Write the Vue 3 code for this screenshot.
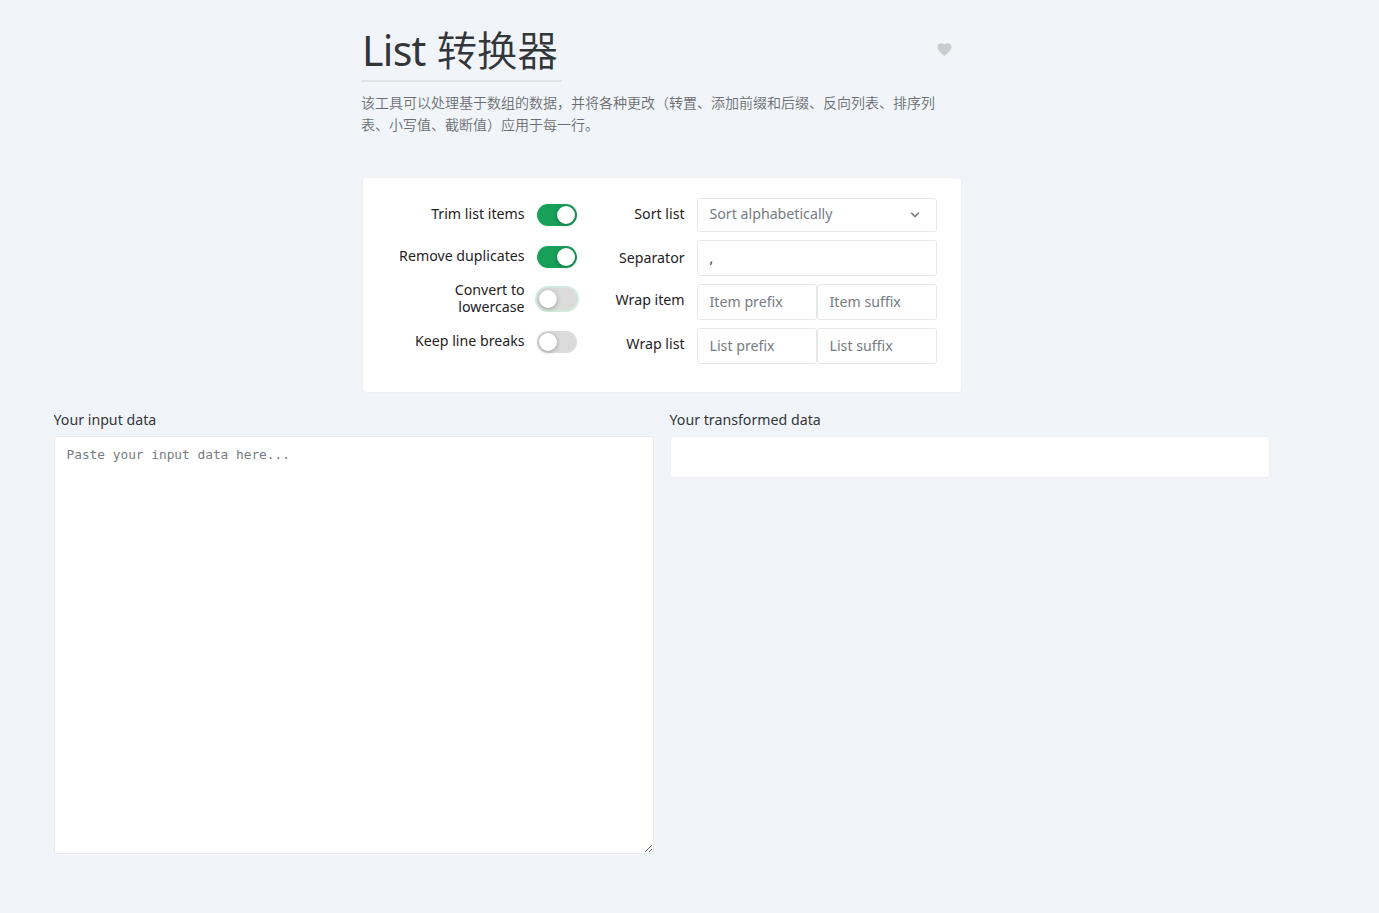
<script setup>
import { ref } from 'vue'

const switches = ref([
  { label: 'Trim list items', on: true, cls: 'trim' },
  { label: 'Remove duplicates', on: true, cls: 'dup' },
  { label: 'Convert to lowercase', on: false, cls: 'lower focused' },
  { label: 'Keep line breaks', on: false, cls: 'keep' },
])
const separator = ref(',')
</script>

<template>
  <main class="page">
    <header class="head">
      <div class="title-row">
        <h1>List <span>转换器</span></h1>
        <svg class="heart" width="17" height="17" viewBox="0 0 24 24">
          <path d="M12 21.35l-1.45-1.32C5.4 15.36 2 12.28 2 8.5C2 5.42 4.42 3 7.5 3c1.74 0 3.41.81 4.5 2.09C13.09 3.81 14.76 3 16.5 3C19.58 3 22 5.42 22 8.5c0 3.78-3.4 6.86-8.55 11.54L12 21.35z" />
        </svg>
      </div>
      <div class="rule"></div>
      <p class="desc">该工具可以处理基于数组的数据，并将各种更改（转置、添加前缀和后缀、反向列表、排序列表、小写值、截断值）应用于每一行。</p>
    </header>

    <section class="card">
      <div class="toggles">
        <div v-for="s in switches" :key="s.label" class="toggle-row" :class="s.cls">
          <span class="label">{{ s.label }}</span>
          <button class="switch" :class="{ on: s.on }" @click="s.on = !s.on"><i></i></button>
        </div>
      </div>
      <div class="fields">
        <div class="field sort">
          <span class="label">Sort list</span>
          <div class="select">
            <span>Sort alphabetically</span>
            <svg width="16" height="16" viewBox="0 0 16 16">
              <path d="M3.6 5.4L8 9.8l4.4-4.4" />
            </svg>
          </div>
        </div>
        <div class="field sep">
          <span class="label">Separator</span>
          <input v-model="separator" />
        </div>
        <div class="field wrap-item">
          <span class="label">Wrap item</span>
          <input placeholder="Item prefix" /><input placeholder="Item suffix" />
        </div>
        <div class="field wrap-list">
          <span class="label">Wrap list</span>
          <input placeholder="List prefix" /><input placeholder="List suffix" />
        </div>
      </div>
    </section>

    <section class="data">
      <div>
        <div class="caption in">Your input data</div>
        <textarea placeholder="Paste your input data here..."></textarea>
      </div>
      <div>
        <div class="caption out">Your transformed data</div>
        <div class="output"></div>
      </div>
    </section>
  </main>
</template>

<style>
html, body { background: #f1f5f9; margin: 0; }
</style>

<style scoped>
* { box-sizing: border-box; }
.page {
  width: 1216px;
  height: 913px;
  margin-left: 54px;
  padding-top: 26px;
  overflow: hidden;
  font-family: "Noto Sans", "Noto Sans CJK SC", sans-serif;
  font-size: 14.2px;
  color: #333639;
}
.head { width: 600px; height: 151px; margin: 0 auto; }
.title-row { display: flex; justify-content: space-between; height: 54px; }
h1 {
  margin: -2px 0 0;
  font-size: 41px;
  font-weight: 400;
  line-height: 50px;
  letter-spacing: -.7px;
  white-space: nowrap;
}
h1 span {
  margin-left: 1px;
  font-family: "Noto Sans CJK SC", sans-serif;
  font-size: 40.4px;
  font-weight: 350;
  letter-spacing: 0;
}
.heart { margin: 15px 9px 0 0; fill: #c9cdd0; }
.rule { width: 200px; height: 2px; background: #e0e3e6; }
.desc {
  margin: 9px 0 0 -1px;
  width: 580px;
  font: 350 14px/22px "Noto Sans CJK SC", sans-serif;
  color: #6b6e71;
}
.card {
  display: flex;
  width: 600px;
  height: 216px;
  margin: 0 auto;
  padding: 20px 24px 19px;
  background: #fff;
  border: 1px solid #efeff5;
  border-radius: 4px;
}
.toggles { width: 190px; padding-top: 6px; }
.toggle-row { display: flex; align-items: center; justify-content: flex-end; height: 22px; margin-bottom: 20px; }
.toggle-row.lower { margin-bottom: 21px; }
.label {
  text-align: right;
  line-height: 17px;
  color: #1f2225;
  padding-right: 12.4px;
}
.toggle-row .label { width: 142px; position: relative; top: -2px; white-space: nowrap; }
.toggle-row.lower .label { width: 100px; top: -1px; white-space: normal; }
.switch {
  flex: none;
  display: flex;
  justify-content: flex-start;
  width: 40px;
  height: 22px;
  padding: 2px;
  border: 0;
  border-radius: 11px;
  background: #dbdbdb;
}
.switch.on { background: #18a058; justify-content: flex-end; }
.switch i {
  width: 18px;
  height: 18px;
  border-radius: 50%;
  background: #fff;
  box-shadow: 0 1px 4px rgba(0, 0, 0, .3), inset 0 0 1px rgba(0, 0, 0, .05);
}
.focused .switch { box-shadow: 0 0 0 2px rgba(24, 160, 88, .2); }
.fields { flex: 1; display: flex; flex-direction: column; gap: 8px; }
.field { display: flex; align-items: center; justify-content: flex-end; height: 36px; }
.field.sort { height: 34px; }
.sort .label { margin-top: -4px; }
.sep .label { margin-top: -2px; }
.wrap-item .label, .wrap-list .label { margin-top: -6px; }
.select, .field input {
  width: 240px;
  height: 100%;
  border: 1px solid #e8e8eb;
  border-radius: 3px;
  background: #fff;
  padding: 0 11px 2px 11.5px;
  font: inherit;
  color: #333639;
  outline: none;
}
.wrap-item input, .wrap-list input { width: 120px; }
.select { display: flex; justify-content: space-between; align-items: center; padding: 0 14px 3px 11.5px; color: #767c82; }
.select svg { width: 14px; height: 14px; position: relative; top: 1px; fill: none; stroke: #767c82; stroke-width: 1.9; }
input::placeholder, textarea::placeholder { color: #767c82; opacity: 1; }
.data { display: grid; grid-template-columns: 600px 600px; gap: 16px; padding-top: 15px; }
.caption { height: 28px; line-height: 24px; margin-left: -.5px; }
textarea {
  display: block;
  width: 600px;
  height: 418px;
  padding: 9px 11px 9px 11.5px;
  border: 1px solid #e9e9ee;
  border-radius: 3px;
  outline: none;
  background: #fff;
  resize: both;
  font: 12.8px/18px "DejaVu Sans Mono", monospace;
}
.output { height: 42px; background: #fff; border: 1px solid #efeff5; border-radius: 4px; }
</style>
